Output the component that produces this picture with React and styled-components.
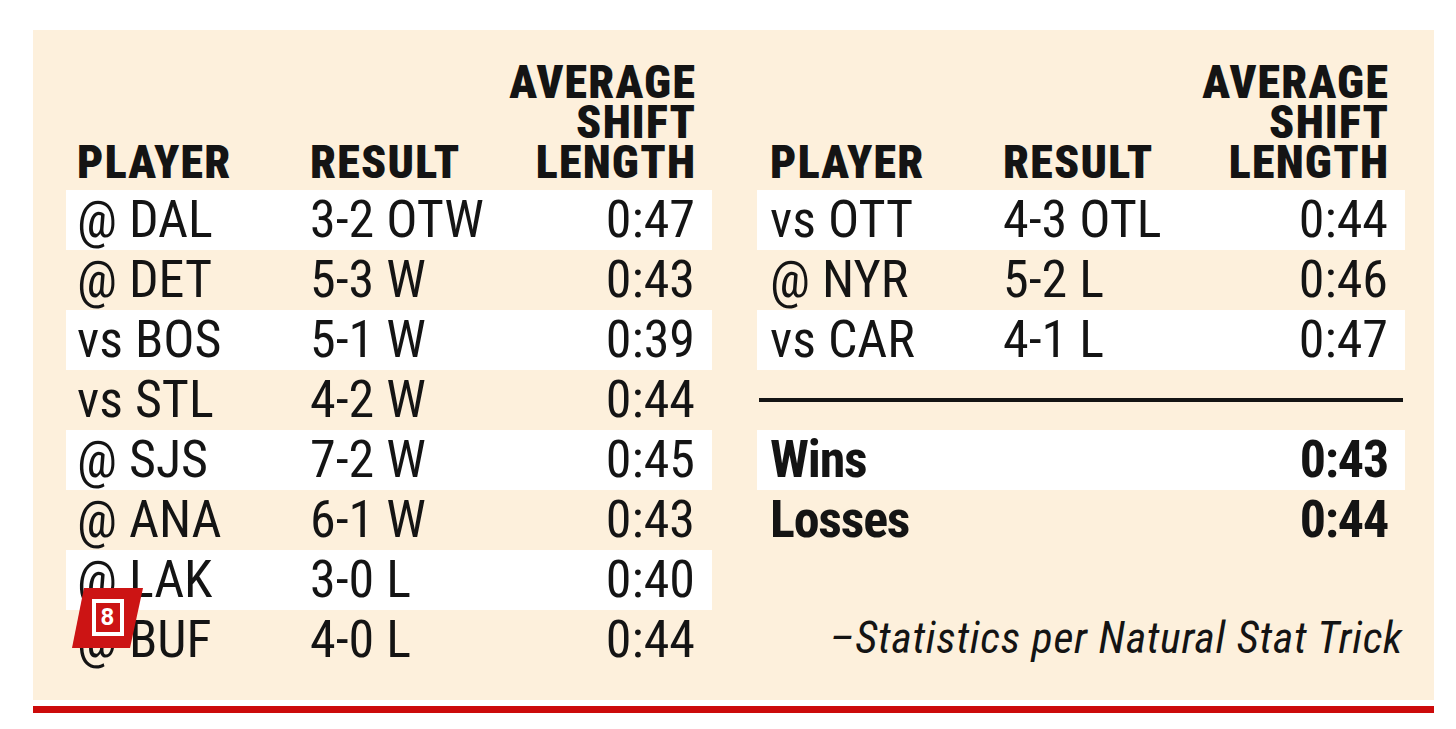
import React from "react";
import styled, { createGlobalStyle } from "styled-components";

const Global = createGlobalStyle`
  html, body { margin: 0; padding: 0; background: #ffffff; }
  body { font-family: "Roboto Condensed", "Liberation Sans Narrow", "Liberation Sans", sans-serif; color: #141414; }
`;

const Frame = styled.div`
  width: 1401px;
  margin: 30px 0 0 33px;
`;

const Panel = styled.div`
  position: relative;
  box-sizing: border-box;
  height: 670px;
  background: #fdf0dc;
  padding: 32px 29px 30px 33px;
  display: flex;
  gap: 45px;
`;

const RedRule = styled.div`
  height: 7px;
  margin-top: 6px;
  background: #cc0a0a;
`;

const Table = styled.div`
  width: ${(p) => p.$width}px;
  display: flex;
  flex-direction: column;
`;

const gridCols = `233px 1fr auto`;

const HeadRow = styled.div`
  display: grid;
  grid-template-columns: ${gridCols};
  align-items: end;
  padding: 0 17px 0 ${(p) => p.$pl}px;
  margin-bottom: 8px;
  font-size: 46px;
  line-height: 40px;
  font-weight: 900;
  letter-spacing: 1.2px;
  text-transform: uppercase;
`;

const HeadCell = styled.div`
  text-align: ${(p) => (p.$right ? "right" : "left")};
  margin-right: ${(p) => (p.$right ? "-1.2px" : "0")};
`;

const Row = styled.div`
  display: grid;
  grid-template-columns: ${gridCols};
  height: 60px;
  line-height: 60px;
  padding: 0 17px 0 ${(p) => p.$pl}px;
  font-size: 52px;
  font-weight: ${(p) => (p.$bold ? 700 : 400)};
  letter-spacing: ${(p) => (p.$bold ? "-1.2px" : "0")};
  background: ${(p) => (p.$striped ? "#ffffff" : "transparent")};
  white-space: nowrap;
`;

const Cell = styled.div`
  text-align: ${(p) => (p.$right ? "right" : "left")};
`;

const Divider = styled.div`
  height: 4px;
  margin: 28px 2px;
  background: #141414;
`;

const Credit = styled.div`
  margin-top: auto;
  height: 60px;
  line-height: 56px;
  padding-right: 2px;
  text-align: right;
  font-size: 44px;
  letter-spacing: 0.7px;
  font-style: italic;
`;

const Badge = styled.div`
  position: absolute;
  left: 39px;
  top: 558px;
  width: 71px;
  height: 60px;
  background: #cc1414;
  clip-path: polygon(12px 0, 100% 0, calc(100% - 13px) 100%, 0 100%);
  display: flex;
  align-items: center;
  justify-content: center;
`;

const BadgeBox = styled.div`
  box-sizing: border-box;
  width: 32px;
  height: 37px;
  margin-top: -2px;
  border: 4px solid #ffffff;
  color: #ffffff;
  font-family: "Roboto", "Liberation Sans", sans-serif;
  font-weight: 700;
  font-size: 24px;
  line-height: 29px;
  text-align: center;
`;

const leftRows = [
  ["@ DAL", "3-2 OTW", "0:47"],
  ["@ DET", "5-3 W", "0:43"],
  ["vs BOS", "5-1 W", "0:39"],
  ["vs STL", "4-2 W", "0:44"],
  ["@ SJS", "7-2 W", "0:45"],
  ["@ ANA", "6-1 W", "0:43"],
  ["@ LAK", "3-0 L", "0:40"],
  ["@ BUF", "4-0 L", "0:44"],
];

const rightRows = [
  ["vs OTT", "4-3 OTL", "0:44"],
  ["@ NYR", "5-2 L", "0:46"],
  ["vs CAR", "4-1 L", "0:47"],
];

const summary = [
  ["Wins", "0:43"],
  ["Losses", "0:44"],
];

function Header({ pl }) {
  return (
    <HeadRow $pl={pl}>
      <HeadCell>Player</HeadCell>
      <HeadCell>Result</HeadCell>
      <HeadCell $right>
        Average
        <br />
        Shift
        <br />
        Length
      </HeadCell>
    </HeadRow>
  );
}

export default function App() {
  return (
    <>
      <Global />
      <Frame>
        <Panel>
          <Table $width={646}>
            <Header pl={11} />
            {leftRows.map(([p, r, a], i) => (
              <Row key={p} $pl={11} $striped={i % 2 === 0}>
                <Cell>{p}</Cell>
                <Cell>{r}</Cell>
                <Cell $right>{a}</Cell>
              </Row>
            ))}
          </Table>
          <Table $width={648}>
            <Header pl={13} />
            {rightRows.map(([p, r, a], i) => (
              <Row key={p} $pl={13} $striped={i % 2 === 0}>
                <Cell>{p}</Cell>
                <Cell>{r}</Cell>
                <Cell $right>{a}</Cell>
              </Row>
            ))}
            <Divider />
            {summary.map(([l, v], i) => (
              <Row key={l} $pl={13} $bold $striped={i === 0}>
                <Cell>{l}</Cell>
                <Cell />
                <Cell $right>{v}</Cell>
              </Row>
            ))}
            <Credit>–Statistics per Natural Stat Trick</Credit>
          </Table>
          <Badge>
            <BadgeBox>8</BadgeBox>
          </Badge>
        </Panel>
        <RedRule />
      </Frame>
    </>
  );
}
